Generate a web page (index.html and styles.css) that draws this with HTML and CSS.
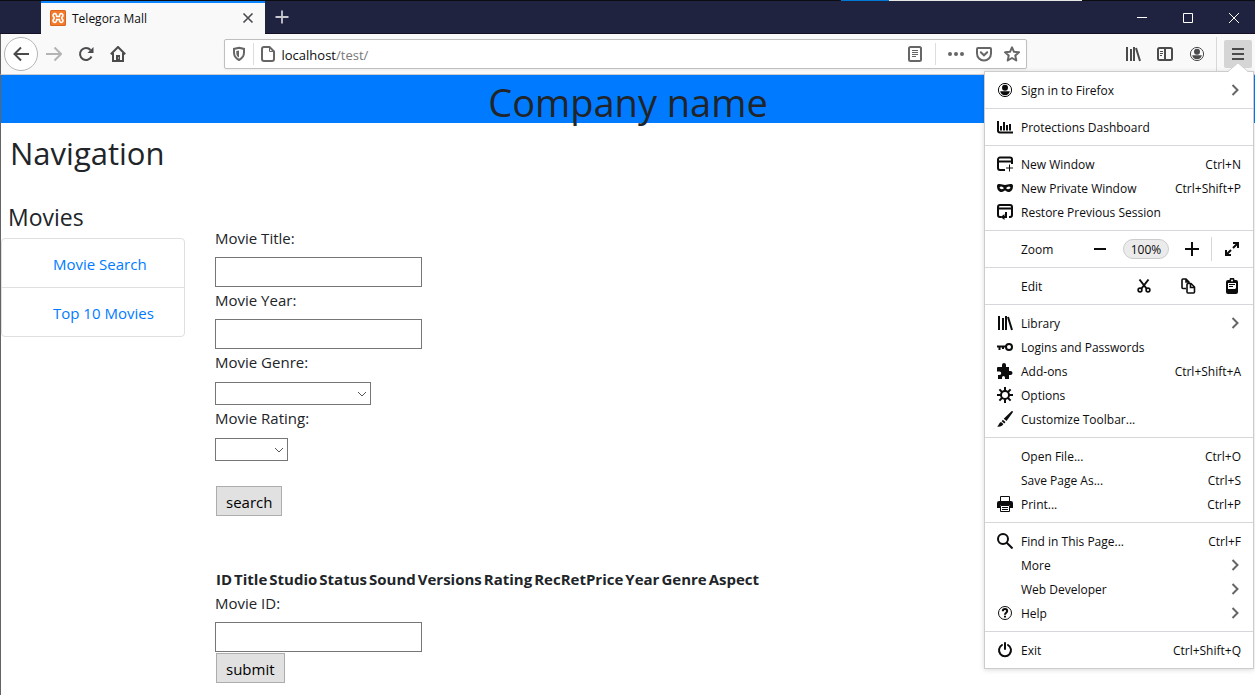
FILE: index.html
```html
<!DOCTYPE html>
<html lang="en">
<head>
<meta charset="utf-8">
<title>Telegora Mall</title>
<link rel="stylesheet" href="styles.css">
</head>
<body>
<div class="desktop-strip"><span class="strip-blue"></span><span class="strip-light"></span></div>
<header class="titlebar">
  <div class="tab">
    <svg class="icon" viewBox="0 0 16 16"><rect width="16" height="16" rx="1.500" fill="#d9651f"/><rect x="1" y="1" width="14" height="14" rx="1" fill="#f37a2b"/><path d="M6.500 6.500C7 2.800 3 2.800 3 5.500 3 6.800 4.300 7 4.300 8S3 9.200 3 10.500c0 2.700 4 2.700 3.500-1M9.500 6.500C9 2.800 13 2.800 13 5.500c0 1.300-1.300 1.500-1.300 2.500s1.300 1.200 1.300 2.500c0 2.700-4 2.700-3.500-1M6 6.500h4M6 9.500h4" fill="none" stroke="#fff" stroke-width="1.600"/></svg>
    <span class="tab-title">Telegora Mall</span>
    <button class="plain" aria-label="Close tab"><svg class="icon" viewBox="0 0 16 16"><path d="M3.500 3.500l9 9m0-9l-9 9" stroke="#4a4a4f" stroke-width="1.600"/></svg></button>
  </div>
  <button class="plain new-tab" aria-label="New tab"><svg class="icon" viewBox="0 0 16 16"><path d="M8 1.500v13M1.500 8h13" stroke="#c8c8d0" stroke-width="1.800"/></svg></button>
  <div class="window-buttons">
    <button class="plain" aria-label="Minimize"><svg class="icon" viewBox="0 0 16 16"><path d="M3 7.500h10" stroke="#fff"/></svg></button>
    <button class="plain" aria-label="Maximize"><svg class="icon" viewBox="0 0 16 16"><path d="M3.500 3.500h9v9h-9z" fill="none" stroke="#fff"/></svg></button>
    <button class="plain" aria-label="Close window"><svg class="icon" viewBox="0 0 16 16"><path d="M3 3l10 10M13 3L3 13" stroke="#fff"/></svg></button>
  </div>
</header>
<nav class="toolbar" aria-label="Browser toolbar">
  <button class="plain back" aria-label="Back"><svg class="icon" viewBox="0 0 16 16"><path d="M16 8H1.500M8 1.500L1.500 8 8 14.500" class="line"/></svg></button>
  <button class="plain tool dim" aria-label="Forward"><svg class="icon" viewBox="0 0 16 16"><path d="M0 8h14.500M8.500 1.500L15 8l-6.500 6.500" class="line"/></svg></button>
  <button class="plain tool" aria-label="Reload"><svg class="icon" viewBox="0 0 16 16"><path d="M13.500 10.500A6 6 0 1 1 12.500 4" class="line"/><path d="M15.500 1v6h-6z" fill="currentColor"/></svg></button>
  <button class="plain tool" aria-label="Home"><svg class="icon" viewBox="0 0 16 16"><path d="M.8 8.200L8 1l7.200 7.200M3 7v8h10V7" class="line"/><path d="M6 9h4v6H6z" fill="currentColor"/><path d="M8.500 11.500v1" stroke="#fff"/></svg></button>
  <div class="spacer"></div>
  <div class="urlbar">
    <svg class="icon" viewBox="0 0 16 16"><path d="M8 1.800l5 1.100v3.600c0 3.600-2 6-5 7.500-3-1.500-5-3.900-5-7.500V2.900z" class="line"/><path d="M8 4.500L5.300 5v2c0 2 .8 3.500 2.700 4.500z" fill="currentColor"/></svg>
    <span class="bar-rule"></span>
    <svg class="icon" viewBox="0 0 16 16"><path d="M4 1h5.500L14 5.500V13a2 2 0 0 1-2 2H4a2 2 0 0 1-2-2V3a2 2 0 0 1 2-2z" class="line"/><path d="M9.500 1v4.500H14" class="line thin"/></svg>
    <span class="url">localhost<span class="path">/test/</span></span>
    <svg class="icon" viewBox="0 0 16 16"><rect x="2" y="1" width="12" height="14" rx="1.500" class="line"/><path d="M5 4.500h6M5 6.500h6M5 8.500h6M5 10.500h4" class="line thin"/></svg>
    <span class="bar-rule wide"></span>
    <div class="page-actions">
      <button class="plain" aria-label="Page actions"><svg class="icon" viewBox="0 0 16 16"><g fill="currentColor"><circle cx="2" cy="8" r="2"/><circle cx="8" cy="8" r="2"/><circle cx="14" cy="8" r="2"/></g></svg></button>
      <button class="plain" aria-label="Save to Pocket"><svg class="icon" viewBox="0 0 16 16"><path d="M2 2h12a1 1 0 0 1 1 1v4.500a7 7 0 0 1-14 0V3a1 1 0 0 1 1-1zM4.800 6.300L8 9.300l3.200-3" class="line" stroke-linecap="round"/></svg></button>
      <button class="plain" aria-label="Bookmark"><svg class="icon" viewBox="0 0 16 16"><path d="M8 1.300l2 4.500 5 .5-3.700 3.300 1 4.900L8 12l-4.300 2.500 1-4.900L1 6.300l5-.5z" class="line" stroke-linejoin="round"/></svg></button>
    </div>
  </div>
  <div class="spacer"></div>
  <button class="plain tool" aria-label="Library"><svg class="icon" viewBox="0 0 16 16"><path d="M2 1v14M6 3v12M9 1v14M11 2l4 13" class="line"/></svg></button>
  <button class="plain tool" aria-label="Sidebars"><svg class="icon" viewBox="0 0 16 16"><rect x="1" y="2" width="14" height="12" rx="1.500" class="line"/><path d="M8 2v12" class="line"/><path d="M3 5.500h3M3 7.500h3M3 9.500h2" class="line thin"/></svg></button>
  <button class="plain tool" aria-label="Account"><svg class="icon" viewBox="0 0 16 16"><circle cx="8" cy="8" r="6.600" class="line thin"/><circle cx="8" cy="5.800" r="3" fill="currentColor"/><path d="M3.200 9.300h9.600C12.300 12 10.500 13.300 8 13.300S3.700 12 3.200 9.300z" fill="currentColor"/></svg></button>
  <span class="tool-rule"></span>
  <button class="plain menu-button" aria-label="Open menu"><svg class="icon" viewBox="0 0 16 16"><path d="M2 3h12M2 8h12M2 13h12" class="line"/></svg></button>
</nav>

<main class="page">
  <h1>Company name</h1>
  <h2>Navigation</h2>
  <div class="columns">
    <aside class="sidebar">
      <h3>Movies</h3>
      <ul>
        <li><a href="#search">Movie Search</a></li>
        <li><a href="#top">Top 10 Movies</a></li>
      </ul>
    </aside>
    <section class="content" id="search">
      <form>
        <label for="title">Movie Title:</label>
        <input id="title" type="text">
        <label for="year">Movie Year:</label>
        <input id="year" type="text">
        <label for="genre">Movie Genre:</label>
        <span class="select genre"><select id="genre"></select><svg viewBox="0 0 10 6"><path d="M1 1l4 4 4-4"/></svg></span>
        <label for="rating">Movie Rating:</label>
        <span class="select rating"><select id="rating"></select><svg viewBox="0 0 10 6"><path d="M1 1l4 4 4-4"/></svg></span>
        <button class="submit search" type="button">search</button>
      </form>
      <table>
        <thead><tr><th>ID</th><th>Title</th><th>Studio</th><th>Status</th><th>Sound</th><th>Versions</th><th>Rating</th><th>RecRetPrice</th><th>Year</th><th>Genre</th><th>Aspect</th></tr></thead>
      </table>
      <form>
        <label for="movie-id">Movie ID:</label>
        <input id="movie-id" type="text">
        <button class="submit" type="button">submit</button>
      </form>
    </section>
  </div>
</main>

<div class="menu">
  <svg class="menu-arrow" viewBox="0 0 20 10"><path d="M0 10L10 1l10 9z" fill="#fff"/><path d="M0 9.500L10 .8l10 8.700" fill="none" stroke="#d0d0d1"/></svg>
  <div class="group">
    <button class="plain item"><svg class="icon" viewBox="0 0 16 16"><circle cx="8" cy="8" r="6.600" class="line thin"/><circle cx="8" cy="5.800" r="3" fill="currentColor"/><path d="M3.200 9.300h9.600C12.300 12 10.500 13.300 8 13.300S3.700 12 3.200 9.300z" fill="currentColor"/></svg><span class="name">Sign in to Firefox</span><svg class="chevron" viewBox="0 0 12 12"><path d="M3.500 1l5 5-5 5"/></svg></button>
  </div>
  <div class="group">
    <button class="plain item"><svg class="icon" viewBox="0 0 16 16"><path d="M1 2v9.500a2 2 0 0 0 2 2h13" class="line"/><path d="M4 7v4.500M7 3v8.500M10 6v5.500M13 5v6.500" class="line"/></svg><span class="name">Protections Dashboard</span></button>
  </div>
  <div class="group">
    <button class="plain item"><svg class="icon" viewBox="0 0 16 16"><path d="M8 14H3a2 2 0 0 1-2-2V3.500a2 2 0 0 1 2-2h10a2 2 0 0 1 2 2V8M1 5.500h14" class="line"/><path d="M12.500 8.500v7M9 12h7" class="line thin"/></svg><span class="name">New Window</span><span class="key">Ctrl+N</span></button>
    <button class="plain item"><svg class="icon" viewBox="0 0 16 16"><path fill="currentColor" fill-rule="evenodd" d="M0 6c0-1.500.8-2 2.500-2C5 4 6 5 8 5s3-1 5.500-1C15.200 4 16 4.500 16 6c0 3.500-1.700 6-4.500 6C9.500 12 9 10.500 8 10.500S6.500 12 4.500 12C1.700 12 0 9.500 0 6zm2.500 1.800C3.200 9 4 9.300 5 9.200c1-.1 1.600-.6 1.900-1.200C6 7 5.200 6.500 4.400 6.500S3 7 2.500 7.800zm11 0C13 7 12.400 6.500 11.600 6.500S10 7 9.100 8c.3.600.9 1.100 1.900 1.200 1 .1 1.800-.2 2.500-1.400z"/></svg><span class="name">New Private Window</span><span class="key">Ctrl+Shift+P</span></button>
    <button class="plain item"><svg class="icon" viewBox="0 0 16 16"><path d="M4.500 13H3a2 2 0 0 1-2-2V3a2 2 0 0 1 2-2h10a2 2 0 0 1 2 2v8a2 2 0 0 1-2 2h-1M1 4.500h14" class="line"/><path d="M9 8v5H6.500" class="line"/><path d="M7.500 10v6l-4-3z" fill="currentColor"/></svg><span class="name">Restore Previous Session</span></button>
  </div>
  <div class="group">
    <div class="item"><span class="name indent">Zoom</span>
      <div class="zoom-controls">
        <button class="plain" aria-label="Zoom out"><svg class="icon" viewBox="0 0 16 16"><path d="M2 8h12" class="line"/></svg></button>
        <button class="plain percent">100%</button>
        <button class="plain" aria-label="Zoom in"><svg class="icon" viewBox="0 0 16 16"><path d="M1 8h14M8 1v14" class="line"/></svg></button>
      </div>
      <span class="zoom-rule"></span>
      <button class="plain small" aria-label="Full screen"><svg class="icon" viewBox="0 0 16 16"><path d="M9 7l5-5M9 2h5v5M7 9l-5 5M2 9v5h5" class="line"/></svg></button>
    </div>
  </div>
  <div class="group">
    <div class="item"><span class="name indent">Edit</span>
      <div class="edit-controls">
        <button class="plain" aria-label="Cut"><svg class="icon" viewBox="0 0 16 16"><path d="M3.500 1.500l7 9M12.500 1.500l-7 9" class="line"/><circle cx="4" cy="12" r="1.900" class="line ring"/><circle cx="12" cy="12" r="1.900" class="line ring"/></svg></button>
        <button class="plain" aria-label="Copy"><svg class="icon" viewBox="0 0 16 16"><path d="M6 10.500H3a1 1 0 0 1-1-1V2a1 1 0 0 1 1-1h3l3 3v1M6 1v3h3" class="line ring"/><path d="M8 5.500h3L14.500 9v5a1 1 0 0 1-1 1H8a1 1 0 0 1-1-1V6.500a1 1 0 0 1 1-1zM10.500 6v3.500h4" class="line ring"/></svg></button>
        <button class="plain" aria-label="Paste"><svg class="icon" viewBox="0 0 16 16"><path fill="currentColor" d="M4 2h1.500a2.500 2.500 0 0 1 5 0H12a2 2 0 0 1 2 2v10a2 2 0 0 1-2 2H4a2 2 0 0 1-2-2V4a2 2 0 0 1 2-2z"/><path d="M4 5h8v5l-1 1H4z" fill="#fff"/><path d="M5 6.500h6M5 8.500h4" class="line thin"/><circle cx="8" cy="2.500" r="1" fill="#fff"/></svg></button>
      </div>
    </div>
  </div>
  <div class="group">
    <button class="plain item"><svg class="icon" viewBox="0 0 16 16"><path d="M2 1v14M6 3v12M9 1v14M11 2l4 13" class="line"/></svg><span class="name">Library</span><svg class="chevron" viewBox="0 0 12 12"><path d="M3.500 1l5 5-5 5"/></svg></button>
    <button class="plain item"><svg class="icon" viewBox="0 0 16 16"><circle cx="12" cy="8" r="3" class="line"/><path d="M9 7.500H0M2.500 7v4M6 7v3" class="line"/></svg><span class="name">Logins and Passwords</span></button>
    <button class="plain item"><svg class="icon" viewBox="0 0 16 16"><path fill="currentColor" d="M5 4V2a2 2 0 0 1 4 0v2h3v4h1.500a2 2 0 1 1 0 4H12v4H8v-1.500a1.500 1.500 0 0 0-3 0V16H1v-4h1.500a1.500 1.500 0 0 0 0-3.500H0V5a1 1 0 0 1 1-1z"/></svg><span class="name">Add-ons</span><span class="key">Ctrl+Shift+A</span></button>
    <button class="plain item"><svg class="icon" viewBox="0 0 16 16"><circle cx="8" cy="8" r="4" class="line"/><path d="M8 0v4M8 12v4M0 8h4M12 8h4M2.400 2.400l2.800 2.800M10.800 10.800l2.800 2.800M13.600 2.400l-2.800 2.800M5.200 10.800l-2.800 2.800" class="line"/></svg><span class="name">Options</span></button>
    <button class="plain item"><svg class="icon" viewBox="0 0 16 16"><path fill="currentColor" d="M14.500.3c1-.7 1.800.2 1.200 1.200L9.500 10 6.700 7.800zM5.800 8.700l2.700 2.200-1.200 1.500-2.600-2.100zM4 11l2.400 2C5 15.300 3 16 0 15.500 2 14.500 2 11.500 4 11z"/></svg><span class="name">Customize Toolbar...</span></button>
  </div>
  <div class="group">
    <button class="plain item"><span class="name indent">Open File...</span><span class="key">Ctrl+O</span></button>
    <button class="plain item"><span class="name indent">Save Page As...</span><span class="key">Ctrl+S</span></button>
    <button class="plain item"><svg class="icon" viewBox="0 0 16 16"><path d="M3.500 6V.5h9V6" class="line thin"/><path fill="currentColor" d="M2 5h12a2 2 0 0 1 2 2v5h-3V9H3v3H0V7a2 2 0 0 1 2-2z"/><path d="M3.500 9.500h9v6h-9zM5 11.500h6M5 13.500h6" class="line thin"/></svg><span class="name">Print...</span><span class="key">Ctrl+P</span></button>
  </div>
  <div class="group">
    <button class="plain item"><svg class="icon" viewBox="0 0 16 16"><circle cx="6" cy="6" r="5" class="line"/><path d="M9.500 9.500l6 6" class="line"/></svg><span class="name">Find in This Page...</span><span class="key">Ctrl+F</span></button>
    <button class="plain item"><span class="name indent">More</span><svg class="chevron" viewBox="0 0 12 12"><path d="M3.500 1l5 5-5 5"/></svg></button>
    <button class="plain item"><span class="name indent">Web Developer</span><svg class="chevron" viewBox="0 0 12 12"><path d="M3.500 1l5 5-5 5"/></svg></button>
    <button class="plain item"><svg class="icon" viewBox="0 0 16 16"><circle cx="8" cy="8" r="6.500" class="line thin"/><path d="M5.800 6.300c0-3 4.400-2.800 4.400-.2C10.200 7.700 8 7.800 8 9.700M8 10.700v1.800" class="line"/></svg><span class="name">Help</span><svg class="chevron" viewBox="0 0 12 12"><path d="M3.500 1l5 5-5 5"/></svg></button>
  </div>
  <div class="group">
    <button class="plain item"><svg class="icon" viewBox="0 0 16 16"><path d="M5 3a6 6 0 1 0 6 0M8 1v6" class="line" stroke-linecap="round"/></svg><span class="name">Exit</span><span class="key">Ctrl+Shift+Q</span></button>
  </div>
</div>
</body>
</html>
```
FILE: styles.css
```css
* { box-sizing: border-box; }
body {
  margin: 0;
  min-height: 100vh;
  display: flex;
  flex-direction: column;
  position: relative;
  background: #fff;
  color: #212529;
  font: 15px/24px "Open Sans", "Noto Sans", sans-serif;
}
.plain {
  display: flex;
  align-items: center;
  justify-content: center;
  padding: 0;
  border: 0;
  background: none;
  color: inherit;
  font: inherit;
}
.icon { width: 16px; height: 16px; flex: none; display: block; }
.line { fill: none; stroke: currentColor; stroke-width: 2; }
.line.thin { stroke-width: 1; }
.line.ring { stroke-width: 1.6; }

.desktop-strip { height: 1px; display: flex; background: #0b0b12; padding-left: 67%; }
.strip-blue { width: 48px; background: #0078d7; }
.strip-light { width: 193px; background: #e6e6e6; }

.titlebar {
  height: 33px;
  display: flex;
  align-items: center;
  padding: 0 1px 0 41px;
  background: #202340;
  box-shadow: inset 0 -1px #150f26;
}
.tab {
  width: 224px;
  height: 33px;
  display: flex;
  align-items: center;
  gap: 6px;
  padding: 0 9px 2px;
  border-top: 2px solid #0a84ff;
  background: #f9f9fa;
  color: #0c0c0d;
  font-size: 12px;
}
.tab-title { flex: 1; padding-top: 2px; }
.new-tab { margin: 0 0 2px 9px; }
.window-buttons { margin-left: auto; display: flex; gap: 6px; }
.window-buttons .plain { width: 40px; height: 32px; }

.toolbar {
  height: 41px;
  display: flex;
  align-items: center;
  padding: 0 3px;
  border-left: 1px solid #646464;
  border-bottom: 1px solid #ccc;
  background: #f9f9fa;
  color: #4b4b4e;
}
.back { width: 34px; height: 34px; border: 1px solid #b5b5b6; border-radius: 50%; background: #fff; }
.tool { width: 32px; height: 32px; }
.dim { color: #b4b4b5; }
.spacer { flex: 91 1 0; }
.urlbar {
  flex: 803 1 0;
  height: 30px;
  display: flex;
  align-items: center;
  padding: 0 6px;
  border: 1px solid #bfbfbf;
  border-radius: 2px;
  background: #fff;
  color: #666;
  box-shadow: 0 1px 3px #0000000d;
}
.bar-rule { width: 1px; height: 22px; margin: 0 6px; background: #ddd; }
.bar-rule.wide { margin: 0 12px; }
.url { flex: 1; padding: 2px 0 0 6px; color: #0c0c0d; font-size: 13px; }
.path { color: #777; }
.page-actions { display: flex; gap: 12px; }
.tool-rule { width: 1px; height: 34px; margin: 0 7px 0 3px; background: #d8d8d8; }
.menu-button { width: 28px; height: 28px; border-radius: 2px; background: #d5d5d6; }

.page { flex: 1; border-left: 1px solid #646464; }
h1, h2, h3 { margin: 0; font-weight: 400; }
h1 { height: 48px; background: #007bff; text-align: center; font-size: 38px; line-height: 54px; }
h2 { padding: 11px 9px 0; font-size: 31px; line-height: 38px; }
.columns { display: flex; gap: 30px; padding-top: 31px; }
.sidebar { width: 184px; flex: none; }
h3 { padding: 0 7px 6px; font-size: 23px; line-height: 29px; }
.sidebar ul { margin: 0; padding: 0; list-style: none; border: 1px solid #dfdfdf; border-radius: 4px; }
.sidebar li { padding: 13px 20px 11px 51px; }
.sidebar li + li { border-top: 1px solid #dfdfdf; }
.sidebar a { color: #007bff; text-decoration: none; }
.content { flex: 1; padding-top: 23px; }
form { display: flex; flex-direction: column; align-items: flex-start; }
label { margin-bottom: 7px; }
input { width: 207px; height: 30px; margin-bottom: 1px; padding: 2px 4px; border: 1px solid #767676; border-radius: 0; font: inherit; }
.select { height: 25px; padding: 1px 0; display: grid; align-items: center; }
.select select, .select svg { grid-area: 1 / 1; }
select { appearance: none; width: 100%; height: 23px; border: 1px solid #767676; border-radius: 0; background: #fff; font: inherit; }
.select svg { width: 10px; height: 6px; justify-self: end; margin-right: 4px; pointer-events: none; }
.select path { fill: none; stroke: #555; }
.genre { width: 156px; }
.rating { width: 73px; }
.submit { height: 30px; margin-left: 1px; padding: 2px 9px 0; border: 1px solid #adadad; background: #e1e1e1; color: #000; font: inherit; }
.search { margin-top: 24px; }
table { margin-top: 49px; border-spacing: 1px 2px; color: #212529; font-size: 15px; line-height: 24px; }
th { padding: 0 1px 0 0; text-align: left; }
table + form { margin-top: -2px; }

.menu {
  position: absolute;
  top: 71px;
  right: 1px;
  width: 270px;
  border: 1px solid #ccc;
  background: #fff;
  color: #0c0c0d;
  font-size: 12px;
  box-shadow: 0 1px 5px #00000026;
}
.menu-arrow { position: absolute; right: 5px; top: -10px; width: 20px; height: 10px; }
.group { padding: 6px 12px; }
.group + .group { border-top: 1px solid #d7d7db; }
.item { width: 100%; height: 24px; display: flex; align-items: center; gap: 8px; }
.name { flex: 1; padding-top: 2px; text-align: left; }
.key { padding-top: 2px; }
.indent { padding-left: 24px; }
.chevron { width: 12px; height: 12px; }
.chevron path { fill: none; stroke: #666; stroke-width: 2; }
.item .small, .zoom-controls .plain, .edit-controls .plain { width: 18px; height: 20px; }
.zoom-controls { display: flex; gap: 14px; }
.zoom-controls .percent { width: 46px; padding-top: 1px; border: 1px solid #ccc; border-radius: 10px; background: #ebebeb; }
.zoom-rule { width: 1px; height: 24px; margin: 0 3px 0 2px; background: #d7d7db; }
.edit-controls { display: flex; gap: 26px; }
```
